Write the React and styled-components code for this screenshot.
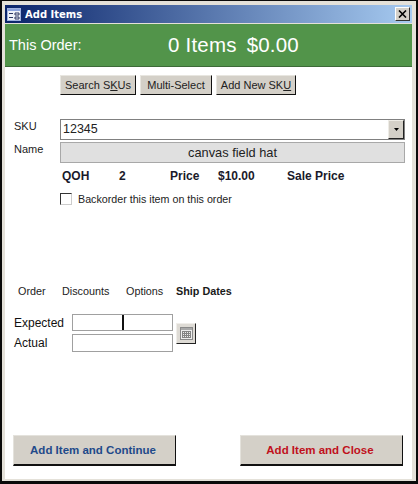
import React from "react";
import styled, { createGlobalStyle } from "styled-components";

const Global = createGlobalStyle`
  html, body { margin: 0; padding: 0; background: #fff; }
  body { font-family: "Liberation Sans", Arial, sans-serif; color: #111; }
`;

const Frame = styled.div`
  box-sizing: border-box;
  width: 418px;
  height: 484px;
  background: #e4e1d9;
  border: solid #0a0a0a;
  border-width: 1px 2px 3px 2px;
  padding: 4px 4px 2px 3px;
  display: flex;
  flex-direction: column;
`;

const TitleBar = styled.div`
  height: 18px;
  flex: none;
  margin-bottom: 1px;
  display: flex;
  align-items: center;
  padding: 0 2px;
  background: linear-gradient(90deg, #0a246a 0%, #a6caf0 100%);
`;

const TitleText = styled.span`
  margin-left: 4px;
  font: bold 10px "DejaVu Sans", "Liberation Sans", sans-serif;
  color: #fff;
`;

const CloseButton = styled.div`
  box-sizing: border-box;
  margin-left: auto;
  width: 15px;
  height: 14px;
  background: #d4d0c8;
  border: 1px solid;
  border-color: #fff #333 #333 #fff;
  display: flex;
  align-items: center;
  justify-content: center;
`;

const Body = styled.div`
  flex: 1;
  background: #fff;
  display: flex;
  flex-direction: column;
`;

const Banner = styled.div`
  height: 43px;
  flex: none;
  box-sizing: border-box;
  background: #52944a;
  border-bottom: 1px solid #3d6a38;
  color: #fff;
  display: flex;
  align-items: center;
  padding-left: 4px;
`;

const BannerLabel = styled.span`
  font-size: 14.5px;
  width: 159px;
  flex: none;
`;

const BannerValue = styled.span`
  font-size: 20.5px;
  letter-spacing: 0.2px;
  margin-right: ${(p) => p.$gap || 0}px;
`;

const ButtonRow = styled.div`
  display: flex;
  gap: 4px;
  margin: 8px 0 0 55px;
`;

const SmallButton = styled.div`
  box-sizing: border-box;
  height: 20px;
  width: ${(p) => p.$w}px;
  background: #d4d0c8;
  border: 1px solid;
  border-color: #e8e6e0 #111 #111 #e8e6e0;
  font-size: 11px;
  color: #222;
  display: flex;
  align-items: center;
  justify-content: center;
  white-space: pre;
`;

const FieldRow = styled.div`
  display: flex;
  margin-top: ${(p) => p.$top}px;
  margin-left: 9px;
`;

const FieldLabel = styled.span`
  width: 46px;
  flex: none;
  font-size: 11px;
  color: #222;
  line-height: 15px;
`;

const SkuBox = styled.div`
  box-sizing: border-box;
  width: 345px;
  height: 21px;
  border: 1px solid #808080;
  display: flex;
  align-items: center;
  justify-content: space-between;
  font-size: 12.5px;
  padding: 0 0 1px 2px;
  color: #222;
`;

const DropButton = styled.div`
  box-sizing: border-box;
  width: 16px;
  height: 19px;
  margin-top: 1px;
  background: #d4d0c8;
  border: 1px solid;
  border-color: #eeece6 #222 #222 #eeece6;
  display: flex;
  align-items: center;
  justify-content: center;
`;

const NameBox = styled.div`
  box-sizing: border-box;
  width: 345px;
  height: 21px;
  background: #e0e0e0;
  border: 1px solid #a8a8a8;
  font-size: 12.8px;
  color: #222;
  display: flex;
  align-items: center;
  justify-content: center;
`;

const StatsRow = styled.div`
  display: flex;
  margin: 6px 0 0 57px;
  font-size: 12px;
  font-weight: bold;
  line-height: 14px;
  color: #1a1a2a;
`;

const Stat = styled.span`
  width: ${(p) => p.$w}px;
  flex: none;
`;

const CheckRow = styled.div`
  display: flex;
  align-items: center;
  margin: 10px 0 0 55px;
  font-size: 10.7px;
  color: #222;
`;

const CheckBox = styled.span`
  box-sizing: border-box;
  width: 12px;
  height: 12px;
  margin-right: 6px;
  border: 1px solid;
  border-color: #333 #ccc #ccc #333;
`;

const Tabs = styled.div`
  display: flex;
  margin: 80px 0 0 13px;
  font-size: 10.8px;
  line-height: 13px;
  color: #222;
`;

const Tab = styled.span`
  width: ${(p) => p.$w}px;
  flex: none;
  font-weight: ${(p) => (p.$active ? "bold" : "normal")};
  color: ${(p) => (p.$active ? "#1a1a1a" : "#222")};
`;

const DatesArea = styled.div`
  display: flex;
  align-items: center;
  margin: 16px 0 0 9px;
`;

const DateRows = styled.div`
  display: flex;
  flex-direction: column;
  gap: 3px;
`;

const DateRow = styled.div`
  display: flex;
  align-items: center;
`;

const DateLabel = styled.span`
  width: 58px;
  flex: none;
  font-size: 12px;
  color: #111;
`;

const DateInput = styled.div`
  box-sizing: border-box;
  width: 101px;
  height: ${(p) => p.$h}px;
  border: 1px solid #a0a0a0;
  position: relative;
`;

const Caret = styled.span`
  position: absolute;
  left: 49px;
  top: 0;
  width: 2px;
  height: 15px;
  background: #111;
`;

const CalendarButton = styled.div`
  box-sizing: border-box;
  width: 20px;
  height: 21px;
  margin: 0 0 0 3px;
  background: #dedbd5;
  border: 1px solid;
  border-color: #f0eeea #222 #222 #f0eeea;
  display: flex;
  align-items: center;
  justify-content: center;
`;

const Footer = styled.div`
  margin: auto 9px 13px 8px;
  display: flex;
  justify-content: space-between;
`;

const BigButton = styled.div`
  box-sizing: border-box;
  width: ${(p) => p.$w}px;
  height: 31px;
  padding-right: 3px;
  background: #d4d0c8;
  border: 1px solid;
  border-color: #e4e2dc #111 #111 #e4e2dc;
  border-bottom-width: 2px;
  font-size: 11.5px;
  font-weight: bold;
  color: ${(p) => p.$color};
  display: flex;
  align-items: center;
  justify-content: center;
`;

const Key = styled.span`
  text-decoration: underline;
`;

const FormIcon = () => (
  <svg width="14" height="13" viewBox="0 0 14 13">
    <rect x="0.5" y="0.5" width="13" height="12" fill="#eef1f8" stroke="#9fb2e0" />
    <rect x="1" y="1" width="12" height="2" fill="#8aa2dc" />
    <path d="M2 5.500h4M2 9.500h4M8 5h4v2H8zM8 9h4v2H8z" fill="none" stroke="#2a3560" strokeWidth="1" />
  </svg>
);

const CloseIcon = () => (
  <svg width="9" height="8" viewBox="0 0 9 8">
    <path d="M1 0.5l7 7M8 0.5l-7 7" stroke="#000" strokeWidth="1.6" />
  </svg>
);

const ArrowIcon = () => (
  <svg width="5" height="3" viewBox="0 0 5 3">
    <path d="M0 0h5L2.500 3z" fill="#000" />
  </svg>
);

const CalendarIcon = () => (
  <svg width="13" height="13" viewBox="0 0 13 13">
    <rect x="0.5" y="0.5" width="12" height="12" fill="#eeeeee" stroke="#8a8a8a" />
    <rect x="1" y="1" width="11" height="2" fill="#a8a8a8" />
    <path d="M2 4.500h9M2 6.500h9M2 8.500h9M2 10.500h9M2.500 4v7M4.500 4v7M6.500 4v7M8.500 4v7M10.500 4v7" stroke="#858585" strokeWidth="1" />
  </svg>
);

export default function App() {
  return (
    <>
      <Global />
      <Frame>
        <TitleBar>
          <FormIcon />
          <TitleText>Add Items</TitleText>
          <CloseButton>
            <CloseIcon />
          </CloseButton>
        </TitleBar>
        <Body>
          <Banner>
            <BannerLabel>This Order:</BannerLabel>
            <BannerValue $gap={10}>0 Items</BannerValue>
            <BannerValue>$0.00</BannerValue>
          </Banner>
          <ButtonRow>
            <SmallButton $w={76}>
              <span>
                Search S<Key>K</Key>Us
              </span>
            </SmallButton>
            <SmallButton $w={72}>Multi-Select</SmallButton>
            <SmallButton $w={80}>
              <span>
                Add New SK<Key>U</Key>
              </span>
            </SmallButton>
          </ButtonRow>
          <FieldRow $top={24}>
            <FieldLabel>SKU</FieldLabel>
            <SkuBox>
              12345
              <DropButton>
                <ArrowIcon />
              </DropButton>
            </SkuBox>
          </FieldRow>
          <FieldRow $top={2}>
            <FieldLabel>Name</FieldLabel>
            <NameBox>canvas field hat</NameBox>
          </FieldRow>
          <StatsRow>
            <Stat $w={57}>QOH</Stat>
            <Stat $w={51}>2</Stat>
            <Stat $w={48}>Price</Stat>
            <Stat $w={69}>$10.00</Stat>
            <Stat $w={70}>Sale Price</Stat>
          </StatsRow>
          <CheckRow>
            <CheckBox />
            Backorder this item on this order
          </CheckRow>
          <Tabs>
            <Tab $w={44}>Order</Tab>
            <Tab $w={64}>Discounts</Tab>
            <Tab $w={50}>Options</Tab>
            <Tab $active $w={70}>Ship Dates</Tab>
          </Tabs>
          <DatesArea>
            <DateRows>
              <DateRow>
                <DateLabel>Expected</DateLabel>
                <DateInput $h={17}>
                  <Caret />
                </DateInput>
              </DateRow>
              <DateRow>
                <DateLabel>Actual</DateLabel>
                <DateInput $h={18} />
              </DateRow>
            </DateRows>
            <CalendarButton>
              <CalendarIcon />
            </CalendarButton>
          </DatesArea>
          <Footer>
            <BigButton $w={163} $color="#1f4a8a">Add Item and Continue</BigButton>
            <BigButton $w={163} $color="#c0101c">Add Item and Close</BigButton>
          </Footer>
        </Body>
      </Frame>
    </>
  );
}
